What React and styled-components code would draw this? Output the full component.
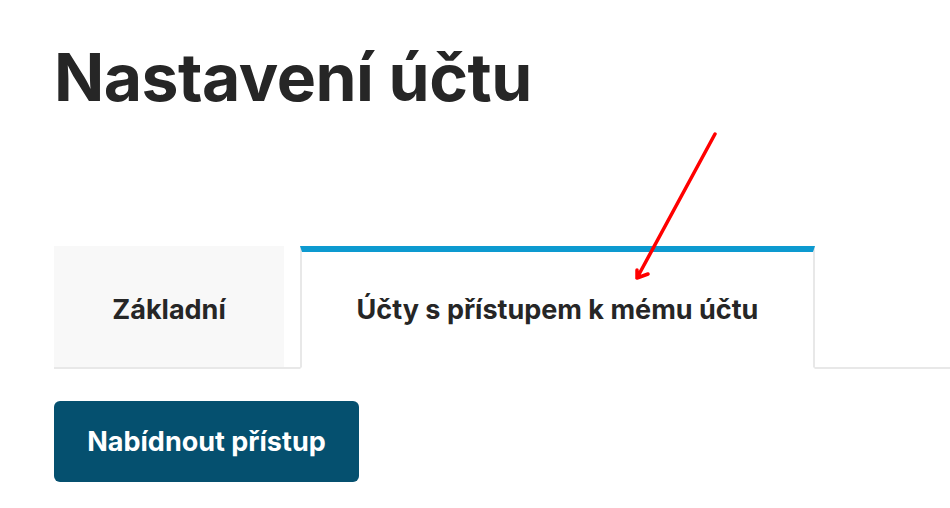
import React, { useState } from 'react';
import styled, { createGlobalStyle } from 'styled-components';

const GlobalStyle = createGlobalStyle`
  html, body {
    margin: 0;
    padding: 0;
    background: #ffffff;
  }
  body {
    font-family: Inter, "Noto Sans", "Liberation Sans", sans-serif;
    color: #262626;
  }
`;

const tabs = [
  { id: 'basic', label: 'Základní' },
  { id: 'access', label: 'Účty s přístupem k mému účtu' },
];

export default function App() {
  const [active, setActive] = useState('access');

  return (
    <Page>
      <GlobalStyle />
      <Title>Nastavení účtu</Title>

      <TabBar>
        {tabs.map((tab) => (
          <Tab
            key={tab.id}
            $active={tab.id === active}
            $wide={tab.id === 'access'}
            onClick={() => setActive(tab.id)}
          >
            {tab.label}
          </Tab>
        ))}
      </TabBar>

      <PrimaryButton>Nabídnout přístup</PrimaryButton>

      {/* red annotation arrow pointing at the active tab */}
      <Arrow width="100" height="160" viewBox="0 0 100 160">
        <path
          d="M90 9 L12 153 M12 153 L12 145 M12 153 L23 149"
          stroke="#ff0000"
          strokeWidth="3.5"
          strokeLinecap="round"
          fill="none"
        />
      </Arrow>
    </Page>
  );
}

const Page = styled.main`
  position: relative;
  width: 950px;
  height: 508px;
  padding: 44px 0 0 54px;
  box-sizing: border-box;
  overflow: hidden;
`;

const Title = styled.h1`
  margin: 0;
  font-size: 66px;
  line-height: 66px;
  font-weight: 700;
  letter-spacing: -0.5px;
  color: #262626;
`;

const TabBar = styled.div`
  display: flex;
  align-items: flex-end;
  gap: 16px;
  margin-top: 136px;
  border-bottom: 2px solid #e8e8e8;
`;

const Tab = styled.button`
  box-sizing: border-box;
  width: ${(p) => (p.$wide ? '515px' : '230px')};
  height: ${(p) => (p.$active ? '123px' : '121px')};
  margin-bottom: ${(p) => (p.$active ? '-2px' : '0')};
  padding: 0;
  display: flex;
  align-items: center;
  justify-content: center;
  font-family: inherit;
  font-size: 27px;
  font-weight: 700;
  color: #262626;
  background: ${(p) => (p.$active ? '#ffffff' : '#f8f8f8')};
  border: none;
  border-top: 6px solid ${(p) => (p.$active ? '#0d9ad0' : 'transparent')};
  border-left: 2px solid ${(p) => (p.$active ? '#e8e8e8' : 'transparent')};
  border-right: 2px solid ${(p) => (p.$active ? '#e8e8e8' : 'transparent')};
  border-bottom: ${(p) => (p.$active ? '2px solid #ffffff' : 'none')};
  cursor: pointer;
`;

const PrimaryButton = styled.button`
  display: block;
  margin-top: 32px;
  width: 305px;
  height: 81px;
  border: none;
  border-radius: 6px;
  background: #05506f;
  color: #ffffff;
  font-family: inherit;
  font-size: 27px;
  font-weight: 700;
  cursor: pointer;
`;

const Arrow = styled.svg`
  position: absolute;
  left: 625px;
  top: 125px;
  pointer-events: none;
`;
